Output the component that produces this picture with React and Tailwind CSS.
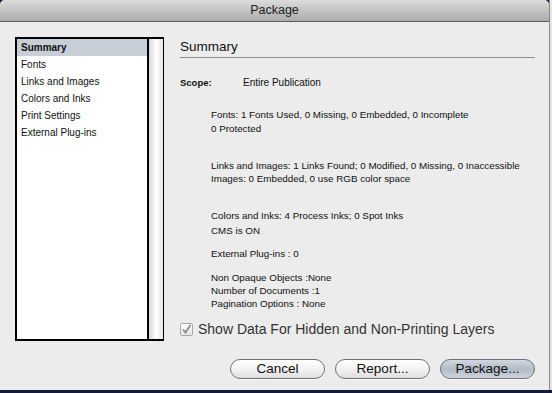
import React from 'react';

const listItems = ['Summary', 'Fonts', 'Links and Images', 'Colors and Inks', 'Print Settings', 'External Plug-ins'];

const AquaButton = ({ label, primary }) => (
  <button
    className={
      'w-[95px] h-[20px] rounded-full border border-[#707070] text-[13.5px] leading-none text-[#111] shadow-[0_1px_0_rgba(255,255,255,0.8)] ' +
      (primary
        ? 'bg-linear-to-b from-[#d2d8e0] via-[#b2bbc7] to-[#ccd3dc]'
        : 'bg-linear-to-b from-white via-[#f3f3f3] to-[#dedede]')
    }
  >
    {label}
  </button>
);

const App = () => {
  return (
    <div className="w-[552px] h-[393px] flex flex-col bg-[#151b3d] overflow-hidden font-['Liberation_Sans',Arial,sans-serif] text-[#111]">
      <div className="flex h-[390px]">
        {/* window */}
        <div className="w-[549px] flex flex-col bg-[#ececec] rounded-t-[5px] overflow-hidden">
          <div className="h-[22px] shrink-0 flex items-center justify-center bg-linear-to-b from-[#dcdcdc] to-[#ababab] border-b border-[#5c5c5c]">
            <span className="text-[12.5px] text-[#222]">Package</span>
          </div>

          <div className="flex flex-1 pl-[15px] pt-[15px]">
            {/* list box */}
            <div className="w-[149px] h-[304px] flex border-2 border-r border-black bg-white">
              <div className="w-[130px] flex flex-col">
                {listItems.map((item, i) => (
                  <div
                    key={item}
                    className={
                      'h-[17px] flex items-center pl-[4px] text-[10px] ' +
                      (i === 0 ? 'bg-[#c8ced8] font-bold' : '')
                    }
                  >
                    {item}
                  </div>
                ))}
              </div>
              <div className="w-[2px] bg-black"></div>
              <div className="flex-1 bg-linear-to-r from-[#d6d6d6] via-white to-[#e4e4e4]"></div>
            </div>

            {/* right panel */}
            <div className="w-[355px] ml-[16px] flex flex-col">
              <div className="h-[19px] mt-[2px] border-b border-[#8c8c8c] text-[13.5px] leading-[16px]">Summary</div>

              <div className="flex mt-[18px] text-[10px] leading-[13px]">
                <span className="w-[63px] font-bold text-[9.5px]">Scope:</span>
                <span>Entire Publication</span>
              </div>

              <div className="pl-[31px] mt-[19px] text-[9.8px] leading-[14px]">
                <div>Fonts: 1 Fonts Used, 0 Missing, 0 Embedded, 0 Incomplete</div>
                <div>0 Protected</div>
              </div>

              <div className="pl-[31px] mt-[23px] text-[9.8px] leading-[13px]">
                <div>Links and Images: 1 Links Found; 0 Modified, 0 Missing, 0 Inaccessible</div>
                <div>Images: 0 Embedded, 0 use RGB color space</div>
              </div>

              <div className="pl-[31px] mt-[23px] text-[9.8px] leading-[15px]">
                <div>Colors and Inks: 4 Process Inks; 0 Spot Inks</div>
                <div>CMS is ON</div>
              </div>

              <div className="pl-[31px] mt-[9px] text-[9.8px] leading-[13px]">External Plug-ins : 0</div>

              <div className="pl-[31px] mt-[11px] text-[9.8px] leading-[13px]">
                <div>Non Opaque Objects :None</div>
                <div>Number of Documents :1</div>
                <div>Pagination Options : None</div>
              </div>

              <div className="flex items-center h-[16px] mt-[11px]">
                <div className="w-[13px] h-[13px] rounded-[2px] border border-[#a9a9a9] bg-linear-to-b from-white to-[#e6e6e6] flex items-center justify-center">
                  <svg width="11" height="11" viewBox="0 0 11 11">
                    <path d="M2 5.5 L4.5 8.5 L9.5 1" fill="none" stroke="#8a8a8a" strokeWidth="1.8" />
                  </svg>
                </div>
                <span className="ml-[5px] text-[14px] text-[#333]">Show Data For Hidden and Non-Printing Layers</span>
              </div>

              <div className="flex justify-end gap-[10px] mt-[22px]">
                <AquaButton label="Cancel" />
                <AquaButton label="Report..." />
                <AquaButton label="Package..." primary />
              </div>
            </div>
          </div>
        </div>
        <div className="w-px bg-[#8a8a8a]"></div>
        <div className="flex-1 bg-[#e6e6e6]"></div>
      </div>
      <div className="flex-1 bg-[#151b3d]"></div>
    </div>
  );
};

export default App;
